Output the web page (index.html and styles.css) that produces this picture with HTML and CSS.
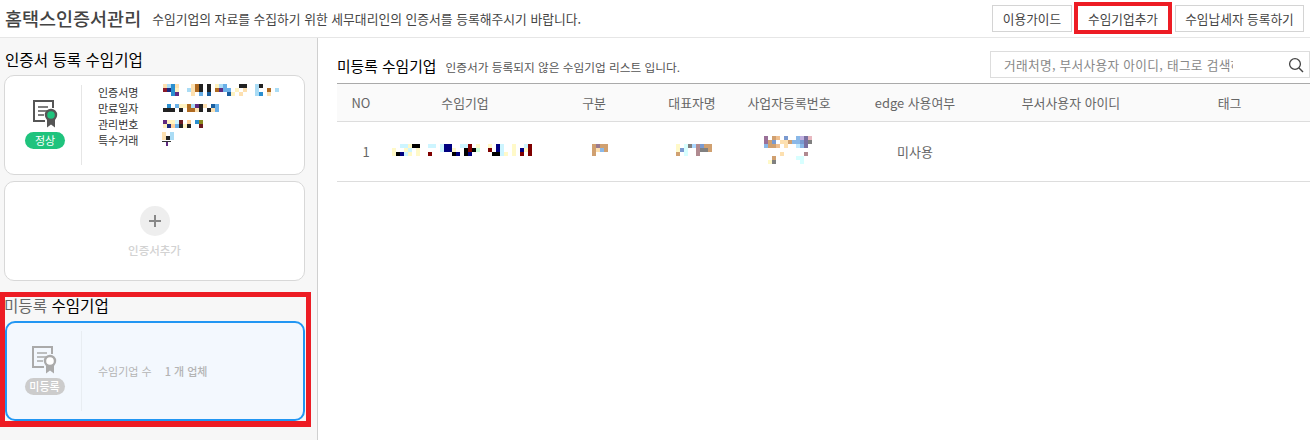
FILE: index.html
```html
<!DOCTYPE html>
<html lang="ko">
<head>
  <meta charset="UTF-8" />
  <title>홈택스인증서관리</title>
  <link rel="stylesheet" href="styles.css">
</head>
<body>

  <header class="top-bar">
    <h1>홈택스인증서관리</h1>
    <p class="top-desc">수임기업의 자료를 수집하기 위한 세무대리인의 인증서를 등록해주시기 바랍니다.</p>
    <div class="top-btns">
      <button class="btn">이용가이드</button>
      <button class="btn btn-marked">수임기업추가</button>
      <button class="btn btn-wide">수임납세자 등록하기</button>
    </div>
  </header>

  <div class="layout">
    <aside class="side">
      <h2 class="side-title">인증서 등록 수임기업</h2>

      <div class="cert-card">
        <div class="cert-state">
          <svg class="cert-icon" viewBox="0 0 26 28">
            <path d="M12 21H1V1H20V8" fill="none" stroke="#555" stroke-width="2"/>
            <path d="M5 7H15M5 11H15M5 15H11" fill="none" stroke="#555" stroke-width="1.6"/>
            <path d="M14 19V27.5L18 24.5L22 27.5V19Z" fill="#555"/>
            <circle cx="18" cy="15" r="5" fill="#1fc37d" stroke="#555" stroke-width="2.4"/>
          </svg>
          <span class="badge badge-ok">정상</span>
        </div>
        <div class="cert-info">
          <div class="info-row"><span class="info-label">인증서명</span>
            <svg class="mosaic mosaic-first" width="120" height="12" viewBox="0 0 30 3" shape-rendering="crispEdges">
              <path fill="#fde0b0" d="M0 0h1v1h-1zM3 0h1v1h-1zM7 0h1v3h-1zM20 1h1v1h-1zM19 2h1v1h-1zM26 2h1v1h-1z"/>
              <path fill="#aadcf5" d="M1 0h1v1h-1zM14 0h1v1h-1zM23 0h1v3h-1zM6 1h1v1h-1zM28 1h1v1h-1z"/>
              <path fill="#2a8fd0" d="M2 0h1v3h-1zM24 2h1v1h-1z"/>
              <path fill="#b06a20" d="M8 0h1v2h-1zM13 1h1v1h-1zM26 1h1v1h-1z"/>
              <path fill="#222" d="M9 0h1v2h-1zM11 0h1v2h-1zM19 0h2v1h-2zM24 0h1v1h-1z"/>
              <path fill="#6ab0e8" d="M15 0h1v2h-1zM16 1h1v1h-1zM9 2h1v1h-1z"/>
              <path fill="#fff2c0" d="M13 0h1v1h-1zM3 1h1v1h-1zM18 1h1v1h-1zM17 2h1v1h-1z"/>
              <path fill="#8b1a2a" d="M0 1h1v1h-1z"/>
              <path fill="#1a2a80" d="M1 1h1v1h-1z"/>
              <path fill="#602a80" d="M14 1h1v1h-1zM3 2h1v1h-1z"/>
              <path fill="#1a5fa0" d="M11 2h1v1h-1zM16 2h1v1h-1z"/>
            </svg>
          </div>
          <div class="info-row"><span class="info-label">만료일자</span>
            <svg class="mosaic" width="56" height="8" viewBox="0 0 14 2" shape-rendering="crispEdges">
              <path fill="#2a8fd0" d="M1 0h1v1h-1z"/>
              <path fill="#6ab0e8" d="M3 0h1v1h-1zM13 0h1v2h-1z"/>
              <path fill="#fff2c0" d="M4 0h2v1h-2z"/>
              <path fill="#b06a20" d="M6 0h1v2h-1zM7 1h1v1h-1z"/>
              <path fill="#aadcf5" d="M7 0h1v1h-1z"/>
              <path fill="#602a80" d="M8 0h1v1h-1z"/>
              <path fill="#222" d="M9 0h1v2h-1zM0 1h3v1h-3zM4 1h1v1h-1zM11 1h1v1h-1z"/>
              <path fill="#fde0b0" d="M10 0h1v1h-1zM12 1h1v1h-1zM8 1h1v1h-1z"/>
              <path fill="#1a5fa0" d="M12 0h1v1h-1z"/>
            </svg>
          </div>
          <div class="info-row"><span class="info-label">관리번호</span>
            <svg class="mosaic" width="40" height="8" viewBox="0 0 10 2" shape-rendering="crispEdges">
              <path fill="#602a80" d="M0 0h1v1h-1z"/>
              <path fill="#fff2c0" d="M1 0h2v1h-2zM0 1h1v1h-1zM5 1h1v1h-1z"/>
              <path fill="#cdf5ff" d="M3 0h1v1h-1z"/>
              <path fill="#6b1a20" d="M4 0h1v1h-1zM9 1h1v1h-1z"/>
              <path fill="#fdd09a" d="M6 0h1v1h-1zM2 1h1v1h-1z"/>
              <path fill="#2a8fd0" d="M8 0h1v1h-1z"/>
              <path fill="#8b8a20" d="M9 0h1v1h-1z"/>
              <path fill="#1a2a80" d="M1 1h1v1h-1z"/>
              <path fill="#6ab0e8" d="M3 1h1v1h-1z"/>
              <path fill="#222" d="M4 1h1v1h-1zM6 1h1v1h-1z"/>
            </svg>
          </div>
          <div class="info-row"><span class="info-label">특수거래</span>
            <svg class="mosaic mosaic-last" width="12" height="14" viewBox="0 0 12 14" shape-rendering="crispEdges">
              <path fill="#fde0b0" d="M0 0h4v8h-4z"/>
              <path fill="#aadcf5" d="M8 0h4v8h-4z"/>
              <path fill="#222" d="M4 4h4v4h-4z"/>
              <path fill="#333" d="M0 9h9v1h-9z"/>
              <path fill="#602a80" d="M4 10h2v4h-2z"/>
            </svg>
          </div>
        </div>
      </div>

      <div class="cert-card add-card">
        <span class="add-circle"></span>
        <span class="add-text">인증서추가</span>
      </div>

      <section class="unreg-box">
        <h2 class="unreg-title"><span class="unreg-gray">미등록</span> 수임기업</h2>
        <div class="cert-card cert-active">
          <div class="cert-state">
            <svg class="cert-icon" viewBox="0 0 26 28">
              <path d="M12 21H1V1H20V8" fill="none" stroke="#aaa" stroke-width="2"/>
              <path d="M5 7H15M5 11H15M5 15H11" fill="none" stroke="#aaa" stroke-width="1.6"/>
              <path d="M14 19V27.5L18 24.5L22 27.5V19Z" fill="#aaa"/>
              <circle cx="18" cy="15" r="5" fill="#fff" stroke="#aaa" stroke-width="2.4"/>
            </svg>
            <span class="badge badge-off">미등록</span>
          </div>
          <div class="unreg-count">수임기업 수<b>1 개 업체</b></div>
        </div>
      </section>
    </aside>

    <main class="content">
      <div class="list-head">
        <h2>미등록 수임기업</h2>
        <p>인증서가 등록되지 않은 수임기업 리스트 입니다.</p>
        <div class="search">
          <input type="text" placeholder="거래처명, 부서사용자 아이디, 태그로 검색하세요" />
          <svg width="16" height="16" viewBox="0 0 16 16">
            <circle cx="7" cy="7" r="5.4" fill="none" stroke="#444" stroke-width="1.3"/>
            <path d="M11 11L15 15" stroke="#444" stroke-width="1.5"/>
          </svg>
        </div>
      </div>

      <table class="list">
        <colgroup>
          <col class="c-no"><col class="c-name"><col class="c-mid"><col class="c-mid">
          <col class="c-biz"><col class="c-wide"><col class="c-wide"><col class="c-tag">
        </colgroup>
        <thead>
          <tr>
            <th>NO</th><th>수임기업</th><th>구분</th><th>대표자명</th>
            <th>사업자등록번호</th><th>edge 사용여부</th><th>부서사용자 아이디</th><th>태그</th>
          </tr>
        </thead>
        <tbody>
          <tr>
            <td class="num">1</td>
            <td>
              <svg class="mosaic m-name" width="140" height="12" viewBox="0 0 35 3" shape-rendering="crispEdges">
                <path fill="#fff9c8" d="M0 1h1v2h-1zM4 0h1v1h-1zM3 1h1v1h-1zM6 1h1v1h-1zM4 2h1v1h-1zM6 2h1v1h-1zM15 1h1v1h-1zM21 0h1v1h-1zM24 0h1v1h-1zM28 2h1v1h-1zM30 0h1v3h-1zM33 1h1v1h-1z"/>
                <path fill="#cdf5ff" d="M2 0h2v1h-2zM9 0h2v1h-2zM12 0h1v2h-1zM17 0h2v1h-2zM27 0h1v3h-1zM4 1h1v1h-1zM3 2h1v1h-1zM33 0h1v1h-1z"/>
                <path fill="#000" d="M5 0h2v1h-2zM18 1h1v1h-1zM20 1h1v1h-1zM15 2h1v1h-1zM1 2h1v1h-1zM14 1h1v1h-1zM25 2h2v1h-2zM18 2h1v1h-1z"/>
                <path fill="#00007f" d="M13 0h2v2h-2zM2 2h1v1h-1zM16 2h1v1h-1zM19 2h1v1h-1zM26 0h1v2h-1zM32 1h1v1h-1z"/>
                <path fill="#7f0000" d="M19 0h1v2h-1zM24 1h1v1h-1zM9 2h1v1h-1zM32 2h1v1h-1zM34 0h1v3h-1z"/>
                <path fill="#c8ffd8" d="M21 1h1v1h-1z"/>
              </svg>
            </td>
            <td>
              <svg class="mosaic m-type" width="16" height="12" viewBox="0 0 4 3" shape-rendering="crispEdges">
                <path fill="#d0a070" d="M0 0h1v3h-1zM2 0h2v1h-2zM3 1h1v1h-1z"/>
                <path fill="#9a7a90" d="M1 0h1v1h-1z"/>
                <path fill="#fde0b0" d="M1 1h1v1h-1z"/>
                <path fill="#8ab8e8" d="M2 1h1v1h-1z"/>
              </svg>
            </td>
            <td>
              <svg class="mosaic m-rep" width="36" height="12" viewBox="0 0 9 3" shape-rendering="crispEdges">
                <path fill="#fff9c8" d="M0 0h1v2h-1z"/>
                <path fill="#d8ffff" d="M2 0h1v3h-1z"/>
                <path fill="#808080" d="M3 0h1v1h-1zM6 1h2v1h-2z"/>
                <path fill="#aad8ff" d="M4 0h1v1h-1z"/>
                <path fill="#b08a90" d="M5 0h1v3h-1z"/>
                <path fill="#7a9ad0" d="M6 0h1v1h-1zM1 1h1v1h-1z"/>
                <path fill="#d0a070" d="M7 0h2v1h-2zM8 1h1v1h-1zM0 2h1v1h-1z"/>
              </svg>
            </td>
            <td>
              <svg class="mosaic m-biz" width="52" height="28" viewBox="0 0 13 7" shape-rendering="crispEdges">
                <path fill="#9a7098" d="M0 0h1v2h-1z"/>
                <path fill="#d0a070" d="M2 0h1v1h-1zM1 1h1v1h-1zM1 2h2v1h-2zM6 1h1v1h-1zM2 5h1v1h-1z"/>
                <path fill="#f0c090" d="M3 0h1v1h-1zM3 2h1v1h-1z"/>
                <path fill="#7a9ad0" d="M5 0h1v1h-1zM2 1h1v1h-1zM9 1h2v1h-2z"/>
                <path fill="#8ab8e8" d="M8 0h1v1h-1zM7 1h2v1h-2zM9 2h1v1h-1zM0 2h1v1h-1z"/>
                <path fill="#c0b0e0" d="M9 0h1v1h-1z"/>
                <path fill="#7a70a0" d="M10 0h1v1h-1zM10 1h1v2h-1z"/>
                <path fill="#e8b8c0" d="M11 0h1v1h-1z"/>
                <path fill="#808080" d="M11 1h1v1h-1zM2 6h1v1h-1z"/>
                <path fill="#fde0b0" d="M4 1h2v1h-2zM5 2h1v1h-1zM4 4h1v1h-1z"/>
                <path fill="#bfe8ff" d="M8 2h1v1h-1z"/>
                <path fill="#b08a90" d="M10 4h1v1h-1z"/>
                <path fill="#d8ffff" d="M8 5h2v1h-2zM9 6h1v1h-1z"/>
                <path fill="#fff9c8" d="M1 6h1v1h-1z"/>
              </svg>
            </td>
            <td>미사용</td>
            <td></td>
            <td></td>
          </tr>
        </tbody>
      </table>
    </main>
  </div>

</body>
</html>
```

FILE: styles.css
```css
* {
  box-sizing: border-box;
}

body {
  margin: 0;
  height: 100vh;
  display: flex;
  flex-direction: column;
  background: #fff;
  font-family: "Noto Sans CJK KR", "Noto Sans", sans-serif;
  color: #333;
  overflow: hidden;
}

h1, h2, p {
  margin: 0;
}

/* top bar */
.top-bar {
  height: 38px;
  flex: none;
  display: flex;
  align-items: center;
  padding: 0 6px 1px 5px;
  border-bottom: 1px solid #e6e6e6;
}

.top-bar h1 {
  font-size: 18.5px;
  font-weight: 500;
  color: #444;
}

.top-desc {
  margin-left: 11px;
  font-size: 12.8px;
  color: #444;
}

.top-btns {
  margin-left: auto;
  display: flex;
  align-items: center;
  gap: 2px;
}

.btn {
  height: 27px;
  width: 80px;
  padding: 0;
  background: #fff;
  border: 1px solid #d4d4d4;
  font-family: inherit;
  font-size: 12.7px;
  color: #444;
}

.btn-marked {
  width: 98px;
  height: 32px;
  border: 4px solid #ed1c24;
}

.btn-wide {
  width: 129px;
  margin-left: 1px;
}

/* sidebar */
.layout {
  flex: 1;
  display: flex;
  min-height: 0;
}

.side {
  width: 318px;
  flex: none;
  background: #f7f7f7;
  border-right: 1px solid #d0d0d0;
  padding: 9px 0 0 4px;
}

.side-title {
  font-size: 15.6px;
  font-weight: 400;
  line-height: 24px;
  color: #000;
  margin: 0 0 4px 1px;
}

.cert-card {
  width: 301px;
  height: 100px;
  background: #fff;
  border: 1.5px solid #d8d8d8;
  border-radius: 10px;
  display: flex;
  align-items: center;
}

.cert-state {
  width: 77px;
  height: 80px;
  flex: none;
  border-right: 1px solid #e6e6e6;
  display: flex;
  flex-direction: column;
  align-items: center;
  padding: 15px 0 0 4px;
}

.cert-icon {
  width: 26px;
  height: 28px;
  margin-left: 1px;
}

.badge {
  width: 40px;
  height: 17px;
  margin-top: 4px;
  border-radius: 9px;
  color: #fff;
  font-size: 11px;
  line-height: 16px;
  text-align: center;
}

.badge-ok {
  background: #1fc37d;
}

.badge-off {
  background: #ccc;
  font-weight: 500;
}

.cert-info {
  align-self: flex-start;
  margin-top: 8px;
  padding-left: 16px;
}

.info-row {
  height: 16px;
  display: flex;
  align-items: center;
  font-size: 11px;
  color: #333;
}

.info-label {
  width: 65px;
}

.mosaic {
  display: block;
}

.mosaic-first {
  margin-top: -4px;
}

.mosaic-last {
  margin-top: -2px;
  margin-left: -1px;
}

.add-card {
  margin-top: 6px;
  flex-direction: column;
  justify-content: flex-start;
  padding-top: 24px;
}

.add-circle {
  width: 30px;
  height: 30px;
  border-radius: 50%;
  background: #eee linear-gradient(#888, #888) center / 12px 2px no-repeat;
  position: relative;
}

.add-circle::after {
  content: "";
  position: absolute;
  left: 14px;
  top: 9px;
  width: 2px;
  height: 12px;
  background: #888;
}

.add-text {
  margin-top: 6px;
  font-size: 11.5px;
  font-weight: 500;
  color: #d2d2d2;
}

/* red marked block */
.unreg-box {
  width: 311px;
  height: 135px;
  margin: 11px 0 0 -4px;
  border: 5px solid #ed1c24;
  border-bottom-width: 6px;
}

.unreg-title {
  font-size: 15.6px;
  font-weight: 400;
  line-height: 16px;
  height: 24px;
  margin-left: -1px;
  color: #000;
}

.unreg-gray {
  color: #666;
}

.cert-active {
  width: 300px;
  background: #f3f8fe;
  border: 2px solid #2196f3;
}

.cert-active .cert-state {
  width: 75px;
  padding-left: 1px;
  border-right-color: #e8edf2;
}

.unreg-count {
  padding-left: 16px;
  font-size: 11px;
  color: #b4b4b4;
}

.unreg-count b {
  margin-left: 13px;
  font-weight: 500;
}

/* list */
.content {
  flex: 1;
  min-width: 0;
  padding: 13px 0 0 19px;
}

.list-head {
  height: 32px;
  display: flex;
  align-items: flex-start;
}

.list-head h2 {
  margin-top: 4px;
  font-size: 14.8px;
  font-weight: 400;
  color: #000;
}

.list-head p {
  margin: 7px 0 0 9px;
  font-size: 11.7px;
  color: #555;
}

.search {
  width: 320px;
  height: 27px;
  margin-left: auto;
  display: flex;
  align-items: center;
  border: 1px solid #ddd;
  padding: 0 5px 0 13px;
}

.search input {
  width: 229px;
  border: none;
  outline: none;
  padding: 0;
  background: none;
  font-family: inherit;
  font-size: 12.7px;
  letter-spacing: 0.3px;
  margin-right: auto;
}

.search input::placeholder {
  color: #888;
}

.list {
  width: 973px;
  table-layout: fixed;
  border-collapse: collapse;
  border-top: 1px solid #aaa;
}

.c-no { width: 48px; }
.c-name { width: 160px; }
.c-mid { width: 98px; }
.c-biz { width: 96px; }
.c-wide { width: 156px; }
.c-tag { width: 161px; }

.list th {
  height: 38px;
  padding: 0;
  background: #fafafa;
  border-bottom: 1px solid #ddd;
  font-size: 12.9px;
  font-weight: 400;
  color: #666;
}

.list td {
  height: 60px;
  padding: 0;
  border-bottom: 1px solid #ddd;
  font-size: 13px;
  color: #666;
  text-align: center;
}

.list td .mosaic {
  margin: -3px auto 0;
}

.list td .m-name {
  transform: translateX(-3px);
}

.list td .m-type {
  transform: translateX(6px);
}

.list td .m-rep {
  transform: translateX(2px);
}

.list td .m-biz {
  transform: translateX(1px);
}

.list td.num {
  padding-left: 10px;
}
```
